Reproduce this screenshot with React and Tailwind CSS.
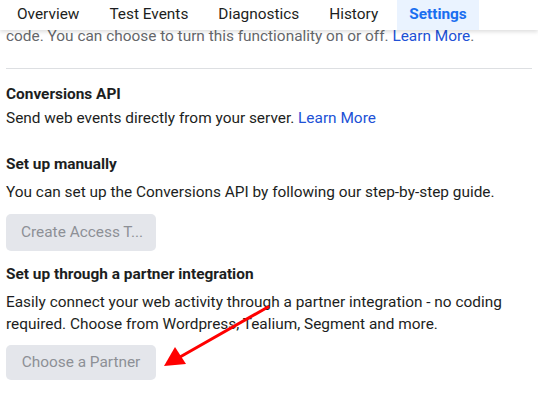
export default function App() {
  const tabs = ["Overview", "Test Events", "Diagnostics", "History"];
  return (
    <div className="relative w-[538px] h-[396px] overflow-hidden bg-white text-[15.4px] text-[#1c1e21]" style={{ fontFamily: "Roboto, 'Liberation Sans', sans-serif" }}>
      <div className="relative z-10 flex h-[30px] items-stretch bg-white pl-[2px] shadow-[0_2px_4px_rgba(0,0,0,0.13)]">
        {tabs.map((t) => (
          <div key={t} className="flex items-center px-[15px] pb-[1px] text-[#1c1e21]">{t}</div>
        ))}
        <div className="ml-[4px] flex items-center bg-[#eaf3ff] px-[12px] pb-[1px] font-bold text-[#1a6ef0]">Settings</div>
      </div>
      <div className="relative px-[6px]">
        <p className="-mt-[5px] leading-[22px] text-[#65676b]">
          code. You can choose to turn this functionality on or off. <span className="text-[#2151d6]">Learn More</span>.
        </p>
        <div className="mt-[21px] border-t border-[#dddfe2]" />
        <div className="mt-[14px] font-bold leading-[22px]">Conversions API</div>
        <p className="mt-[2px] leading-[22px]">Send web events directly from your server. <span className="text-[#2151d6]">Learn More</span></p>
        <div className="mt-[24px] font-bold leading-[22px]">Set up manually</div>
        <p className="mt-[6px] leading-[22px]">You can set up the Conversions API by following our step-by-step guide.</p>
        <div className="mt-[11px] flex h-[37px] w-[150px] items-center whitespace-nowrap rounded-[5px] bg-[#e4e6eb] px-[15px] text-[#8d9096]">Create Access T...</div>
        <div className="mt-[12px] font-bold leading-[22px]">Set up through a partner integration</div>
        <p className="mt-[6px] leading-[22px]">Easily connect your web activity through a partner integration - no coding required. Choose from Wordpress, Tealium, Segment and more.</p>
        <div className="mt-[10px] flex h-[35px] w-[150px] items-center justify-center whitespace-nowrap rounded-[5px] bg-[#e4e6eb] text-[#8d9096]">Choose a Partner</div>
      </div>
      <svg className="pointer-events-none absolute left-0 top-0" width="538" height="396">
        <line x1="268" y1="307" x2="180" y2="357" stroke="#ff0000" strokeWidth="3" strokeLinecap="round" />
        <polygon points="164,366 175,347 186,364" fill="#ff0000" />
      </svg>
    </div>
  );
}
